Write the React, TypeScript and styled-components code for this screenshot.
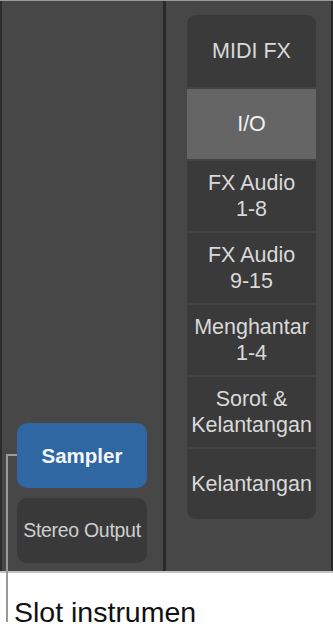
import styled, { createGlobalStyle } from "styled-components";

const GlobalStyle = createGlobalStyle`
  html, body {
    margin: 0;
    padding: 0;
    background: #ffffff;
  }
  body {
    font-family: "Liberation Sans", Arial, sans-serif;
  }
`;

const Figure = styled.div`
  position: relative;
  width: 333px;
  height: 638px;
  overflow: hidden;
`;

const Strip = styled.div`
  display: flex;
  height: 573px;
  box-sizing: border-box;
  border-top: 1px solid #9a9a9a;
  border-bottom: 2px solid #c4c4c4;
  background: #474747;
`;

const LeftColumn = styled.div`
  width: 163px;
  border-left: 2px solid #2c2c2c;
  display: flex;
  flex-direction: column;
  justify-content: flex-end;
  gap: 10px;
  padding: 0 0 8px 15px;
  box-sizing: border-box;
`;

const Divider = styled.div`
  width: 3px;
  background: #2a2a2a;
`;

const RightColumn = styled.div`
  flex: 1;
  padding: 14px 0 0 21px;
  border-right: 2px solid #2a2a2a;
`;

const Slot = styled.div<{ $variant: "instrument" | "output" }>`
  width: 130px;
  height: 65px;
  border-radius: 10px;
  display: flex;
  align-items: center;
  justify-content: center;
  background: ${(p) => (p.$variant === "instrument" ? "#2f67a2" : "#393939")};
  color: ${(p) => (p.$variant === "instrument" ? "#f4f6fa" : "#cfcfcf")};
  font-size: ${(p) => (p.$variant === "instrument" ? "20.5px" : "19.5px")};
  font-weight: ${(p) => (p.$variant === "instrument" ? 700 : 400)};
  letter-spacing: ${(p) => (p.$variant === "instrument" ? "0" : "-0.3px")};
`;

const Menu = styled.div`
  width: 129px;
  display: flex;
  flex-direction: column;
  gap: 2px;
  background: #444444;
  border-radius: 9px;
  overflow: hidden;
`;

const MenuItem = styled.div<{ $active?: boolean }>`
  height: 70px;
  display: flex;
  align-items: center;
  justify-content: center;
  text-align: center;
  background: ${(p) => (p.$active ? "#656565" : "#3a3a3a")};
  color: ${(p) => (p.$active ? "#f2f2f2" : "#d9d9d9")};
  font-size: 21.5px;
  line-height: 26px;
  &:first-child {
    height: 72px;
  }
`;

const Callout = styled.div`
  position: absolute;
  left: 6px;
  top: 454px;
  width: 11px;
  height: 168px;
  border-top: 2px solid #9a9a9a;
  border-left: 2px solid #9a9a9a;
  box-sizing: border-box;
`;

const Caption = styled.div`
  padding: 23px 0 0 14px;
  font-size: 28.5px;
  line-height: 33px;
  color: #111111;
`;

const items = [
  "MIDI FX",
  "I/O",
  "FX Audio\n1-8",
  "FX Audio\n9-15",
  "Menghantar\n1-4",
  "Sorot &\nKelantangan",
  "Kelantangan",
];

const Lines = ({ text }: { text: string }) => (
  <span>
    {text.split("\n").map((line, i) => (
      <span key={i}>
        {i > 0 && <br />}
        {line}
      </span>
    ))}
  </span>
);

export default function App() {
  return (
    <Figure>
      <GlobalStyle />
      <Strip>
        <LeftColumn>
          <Slot $variant="instrument">Sampler</Slot>
          <Slot $variant="output">Stereo Output</Slot>
        </LeftColumn>
        <Divider />
        <RightColumn>
          <Menu>
            {items.map((item) => (
              <MenuItem key={item} $active={item === "I/O"}>
                <Lines text={item} />
              </MenuItem>
            ))}
          </Menu>
        </RightColumn>
      </Strip>
      <Callout />
      <Caption>Slot instrumen</Caption>
    </Figure>
  );
}
